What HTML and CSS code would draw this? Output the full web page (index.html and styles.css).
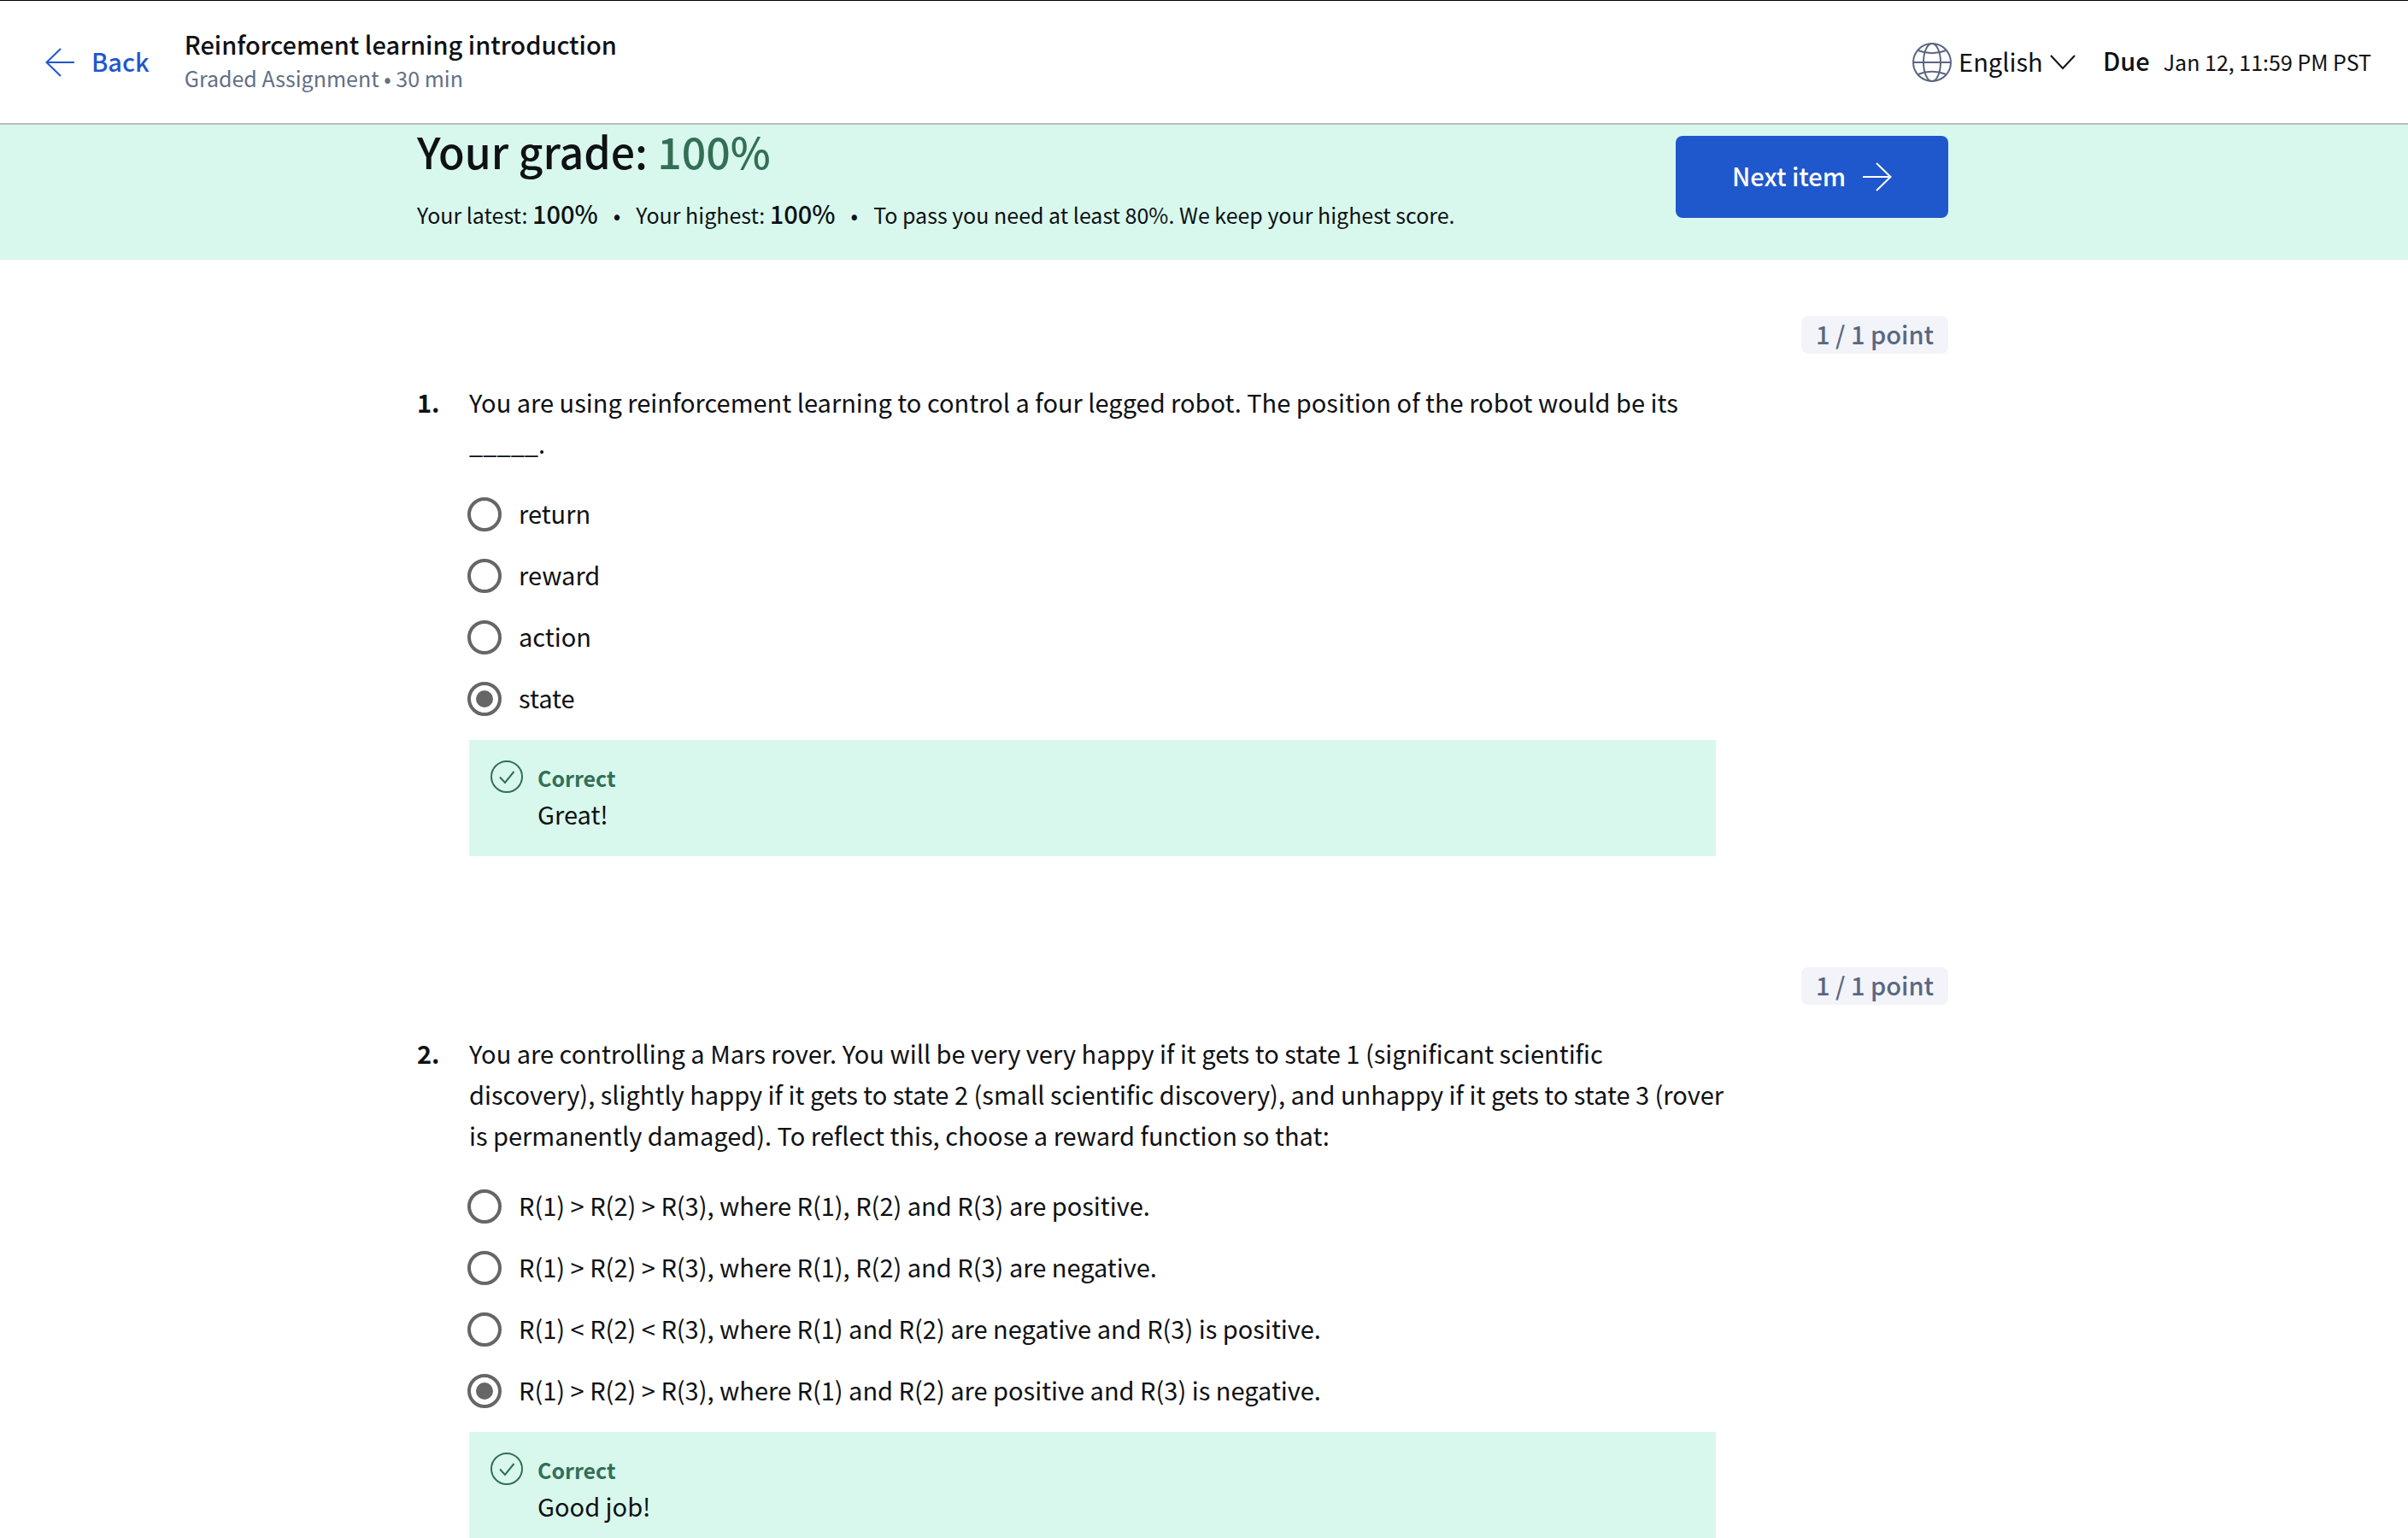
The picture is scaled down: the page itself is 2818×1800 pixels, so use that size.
FILE: index.html
```html
<!DOCTYPE html>
<html lang="en">
<head>
<meta charset="utf-8">
<meta name="viewport" content="width=device-width, initial-scale=1">
<title>Reinforcement learning introduction</title>
<link rel="stylesheet" href="styles.css">
</head>
<body>
<header class="topbar">
  <a class="back" href="#">
    <svg class="arrow" viewBox="0 0 34 34" aria-hidden="true"><path d="M34 17H1.5M18 1L1.5 17L18 33"/></svg>
    <span class="label">Back</span>
  </a>
  <div class="assignment label">
    <h1 class="assignment-title">Reinforcement learning introduction</h1>
    <p class="assignment-meta">Graded Assignment • 30 min</p>
  </div>
  <div class="language">
    <svg class="globe" viewBox="0 0 46 46" aria-hidden="true"><circle cx="23" cy="23" r="22"/><ellipse cx="23" cy="23" rx="10" ry="22"/><path d="M1 23H45M6.500 9Q23 15.500 39.500 9M6.500 37Q23 30.500 39.500 37"/></svg>
    <select class="language-select label" aria-label="Language"><option>English</option></select>
    <svg class="chevron" viewBox="0 0 30 18" aria-hidden="true"><path d="M1 1L15 16L29 1"/></svg>
  </div>
  <p class="due label"><strong>Due</strong><span class="due-date">Jan 12, 11:59 PM PST</span></p>
</header>

<section class="banner">
  <div class="container banner-row">
    <div>
      <h2 class="grade">Your grade: <span class="grade-value">100%</span></h2>
      <p class="grade-detail">
        <span>Your latest: <strong>100%</strong></span><span>•</span><span>Your highest: <strong>100%</strong></span><span>•</span><span>To pass you need at least 80%. We keep your highest score.</span>
      </p>
    </div>
    <button class="next" type="button">
      <span class="label">Next item</span>
      <svg class="arrow" viewBox="0 0 34 34" aria-hidden="true"><path d="M0 17H32.500M16 1L32.500 17L16 33"/></svg>
    </button>
  </div>
</section>

<main class="quiz">
  <section class="question container">
    <p class="points label">1 / 1 point</p>
    <div class="question-body">
      <h3 class="number">1.</h3>
      <div class="content">
        <p class="prompt" id="q1">You are using reinforcement learning to control a four legged robot. The position of the robot would be its _____.</p>
        <div class="options" role="radiogroup" aria-labelledby="q1">
          <label class="option"><input class="radio" type="radio" name="q1"><span class="label">return</span></label>
          <label class="option"><input class="radio" type="radio" name="q1"><span class="label">reward</span></label>
          <label class="option"><input class="radio" type="radio" name="q1"><span class="label">action</span></label>
          <label class="option"><input class="radio" type="radio" name="q1" checked><span class="label">state</span></label>
        </div>
        <div class="feedback">
          <svg class="check" viewBox="0 0 38 38" aria-hidden="true"><circle cx="19" cy="19" r="18"/><path d="M11 19.500L17 26L27.500 13"/></svg>
          <div>
            <p class="verdict">Correct</p>
            <p class="remark">Great!</p>
          </div>
        </div>
      </div>
    </div>
  </section>

  <section class="question container">
    <p class="points label">1 / 1 point</p>
    <div class="question-body">
      <h3 class="number">2.</h3>
      <div class="content">
        <p class="prompt" id="q2">You are controlling a Mars rover. You will be very very happy if it gets to state 1 (significant scientific discovery), slightly happy if it gets to state 2 (small scientific discovery), and unhappy if it gets to state 3 (rover is permanently damaged). To reflect this, choose a reward function so that:</p>
        <div class="options" role="radiogroup" aria-labelledby="q2">
          <label class="option"><input class="radio" type="radio" name="q2"><span class="label">R(1) &gt; R(2) &gt; R(3), where R(1), R(2) and R(3) are positive.</span></label>
          <label class="option"><input class="radio" type="radio" name="q2"><span class="label">R(1) &gt; R(2) &gt; R(3), where R(1), R(2) and R(3) are negative.</span></label>
          <label class="option"><input class="radio" type="radio" name="q2"><span class="label">R(1) &lt; R(2) &lt; R(3), where R(1) and R(2) are negative and R(3) is positive.</span></label>
          <label class="option"><input class="radio" type="radio" name="q2" checked><span class="label">R(1) &gt; R(2) &gt; R(3), where R(1) and R(2) are positive and R(3) is negative.</span></label>
        </div>
        <div class="feedback">
          <svg class="check" viewBox="0 0 38 38" aria-hidden="true"><circle cx="19" cy="19" r="18"/><path d="M11 19.500L17 26L27.500 13"/></svg>
          <div>
            <p class="verdict">Correct</p>
            <p class="remark">Good job!</p>
          </div>
        </div>
      </div>
    </div>
  </section>
</main>
</body>
</html>
```
FILE: styles.css
```css
* {
  box-sizing: border-box;
}

body {
  margin: 0;
  background: #fff;
  color: #0f1114;
  font-family: "Noto Sans CJK JP", "Noto Sans CJK SC", sans-serif;
  font-size: 29px;
  line-height: 48px;
}

h1, h2, h3, p {
  margin: 0;
}

svg {
  display: block;
  flex: none;
  fill: none;
  stroke: currentColor;
  stroke-width: 2;
}

/* Optical centring of text beside icons and controls */
.label {
  padding-bottom: 4px;
}

.topbar {
  display: flex;
  align-items: center;
  min-height: 146px;
  padding: 0 43px 0 53px;
  border-top: 1px solid #000;
  border-bottom: 2px solid #bbb;
}

.back {
  display: flex;
  align-items: center;
  gap: 20px;
  margin-right: 41px;
  color: #1f58cc;
  font-weight: 500;
  text-decoration: none;
}

.arrow {
  width: 34px;
  height: 34px;
}

.assignment-title {
  font-size: 29px;
  font-weight: 500;
  line-height: 40px;
}

.assignment-meta {
  color: #636f87;
  font-size: 25px;
  line-height: 40px;
}

.language {
  display: flex;
  align-items: center;
  gap: 8px;
  margin-left: auto;
}

.globe {
  width: 46px;
  height: 46px;
  color: #5b6780;
}

.language-select {
  appearance: none;
  padding: 0 0 4px;
  border: 0;
  background: none;
  color: inherit;
  font: inherit;
}

.chevron {
  width: 30px;
  height: 18px;
}

.due {
  display: flex;
  align-items: baseline;
  gap: 16px;
  margin-left: 32px;
}

.due strong {
  font-weight: 500;
}

.due-date {
  font-size: 25px;
}

.banner {
  padding: 2px 50px 29px 0;
  background: #d8f8ed;
}

.container {
  width: 100%;
  max-width: 1792px;
  margin: 0 auto;
}

.banner-row {
  display: flex;
  justify-content: space-between;
  align-items: flex-start;
}

.grade {
  font-size: 50px;
  font-weight: 500;
  line-height: 56px;
}

.grade-value {
  color: #336f56;
}

.grade-detail {
  display: flex;
  align-items: baseline;
  gap: 18px;
  margin-top: 21px;
  font-size: 25px;
}

.grade-detail strong {
  font-size: 29px;
  font-weight: 500;
}

.next {
  display: flex;
  align-items: center;
  justify-content: center;
  gap: 20px;
  height: 96px;
  margin-top: 11px;
  padding: 0 66px;
  border: 0;
  border-radius: 8px;
  background: #1f58cc;
  color: #fff;
  font: inherit;
  font-weight: 500;
}

.quiz {
  padding: 66px 50px 0 0;
}

.question {
  display: flex;
  flex-direction: column;
  gap: 32px;
  padding-bottom: 130px;
}

.points {
  align-self: flex-end;
  padding-left: 17px;
  padding-right: 17px;
  border-radius: 8px;
  background: #f2f4fa;
  color: #5b6780;
  font-weight: 500;
  line-height: 40px;
}

.question-body {
  display: flex;
}

.number {
  flex: none;
  width: 61px;
  font-size: 29px;
  font-weight: 700;
}

.content {
  flex: 1;
  max-width: 1459px;
}

.prompt {
  margin-right: -16px;
}

.options {
  margin: 24px 0 12px;
}

.option {
  display: flex;
  align-items: center;
  gap: 20px;
  min-height: 72px;
}

.radio {
  appearance: none;
  flex: none;
  width: 40px;
  height: 40px;
  margin: 0 0 0 -2px;
  padding: 6px;
  border: 4px solid #666;
  border-radius: 50%;
}

.radio:checked {
  background: #666 content-box;
}

.feedback {
  display: flex;
  gap: 17px;
  padding: 24px 24px 28px 25px;
  background: #d8f8ed;
}

.check {
  width: 38px;
  height: 38px;
  color: #336f56;
}

.verdict {
  color: #336f56;
  font-size: 25px;
  font-weight: 700;
  line-height: 40px;
}

.remark {
  line-height: 44px;
}
```
